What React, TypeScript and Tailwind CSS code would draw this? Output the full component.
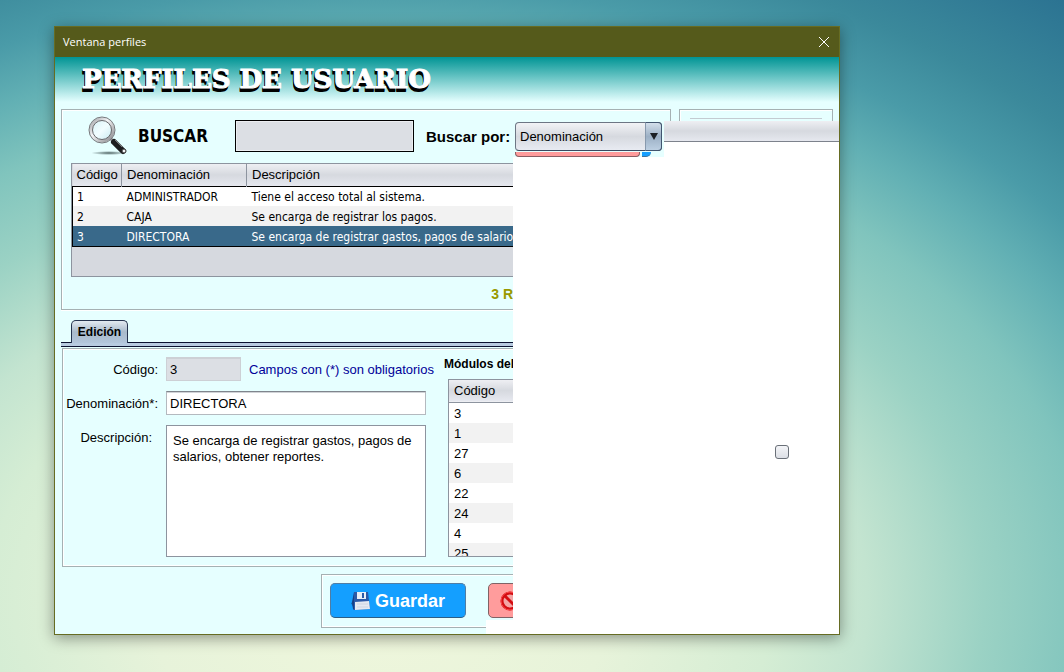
const PROFILES = [
  { id: 1, name: 'ADMINISTRADOR', description: 'Tiene el acceso total al sistema.' },
  { id: 2, name: 'CAJA', description: 'Se encarga de registrar los pagos.' },
  { id: 3, name: 'DIRECTORA', description: 'Se encarga de registrar gastos, pagos de salarios' },
]

const MODULES = [3, 1, 27, 6, 22, 24, 4, 25]

const HEADER_BG = 'bg-linear-to-b from-[#eeeff3] via-[#d6d9df] to-[#e6e8ef]'
const TAHOMA = "font-['DejaVu_Sans_Condensed','DejaVu_Sans',sans-serif]"

function MagnifierIcon() {
  return (
    <svg width="40" height="40" viewBox="0 0 40 40" aria-hidden="true">
      <defs>
        <linearGradient id="ring" x1="0" y1="0" x2="1" y2="1">
          <stop offset="0" stopColor="#a0a0a4" />
          <stop offset="0.4" stopColor="#f4f4f6" />
          <stop offset="1" stopColor="#88888c" />
        </linearGradient>
        <linearGradient id="lens" x1="0" y1="0" x2="1" y2="1">
          <stop offset="0" stopColor="#d3f0f6" />
          <stop offset="0.5" stopColor="#f2fdff" />
          <stop offset="1" stopColor="#c4e8ef" />
        </linearGradient>
        <radialGradient id="ground">
          <stop offset="0" stopColor="#4f6464" />
          <stop offset="1" stopColor="#4f6464" stopOpacity="0" />
        </radialGradient>
      </defs>
      <ellipse cx="21" cy="37" rx="18" ry="2" fill="url(#ground)" />
      <path d="M22 22 L27 27" stroke="#99999d" strokeWidth="3" />
      <path d="M26 26 L35 35" stroke="#1d1d1f" strokeWidth="6" strokeLinecap="round" />
      <path d="M27 24 L34 31" stroke="#77777a" strokeWidth="1" />
      <circle cx="36" cy="35" r="2" fill="#f4f4f6" stroke="#333" />
      <circle cx="14" cy="14" r="11" fill="url(#lens)" stroke="url(#ring)" strokeWidth="3" />
      <circle cx="14" cy="14" r="13" fill="none" stroke="#77777b" />
      <circle cx="14" cy="14" r="9.5" fill="none" stroke="#68686c" />
    </svg>
  )
}

function DiskIcon() {
  return (
    <svg width="20" height="20" viewBox="0 0 20 20" aria-hidden="true">
      <path d="M0 12 L4 10 V19 Z" fill="#0a5fa5" />
      <path d="M3 1 H17 L19 18 L3 19 Z" fill="#2a59a8" />
      <path d="M3 1 L3 19 L2 18 L1 11 Z" fill="#173f86" />
      <path d="M6 1 H15 V8 H6 Z" fill="#e9eef7" />
      <path d="M11 2 H13 V7 H11 Z" fill="#2a59a8" />
      <path d="M4 11 L18 10 L19 18 L4 19 Z" fill="#e4e9f2" />
      <path d="M6 13 H17 M6 16 H17" stroke="#cdd5e2" />
    </svg>
  )
}

function ForbiddenIcon() {
  return (
    <svg className="shrink-0" width="20" height="20" viewBox="0 0 20 20" aria-hidden="true">
      <circle cx="10" cy="10" r="8" fill="#f3a5a5" stroke="#d40d12" strokeWidth="3" />
      <path d="M5 5 L15 15" stroke="#d40d12" strokeWidth="3" />
      <circle cx="10" cy="10" r="9" fill="none" stroke="#f8484c" />
    </svg>
  )
}

function SearchPanel() {
  return (
    <section className="h-[201px] border border-r-0 border-[#a5b1b3] pl-[9px] shadow-[inset_1px_1px_0_#fff,0_1px_0_#fff]">
      <div className="mb-0.5 flex h-[51px] items-center">
        <div className="ml-[17px]">
          <MagnifierIcon />
        </div>
        <label htmlFor="buscar" className={`ml-2.5 w-[97px] pt-0.5 text-[17px] font-bold ${TAHOMA}`}>
          BUSCAR
        </label>
        <input
          id="buscar"
          type="text"
          className="h-8 w-[179px] shrink-0 border border-black bg-[#dcdfe4] px-1 shadow-[inset_0_0_0_1px_#eceef1]"
        />
        <label htmlFor="campo" className="ml-3 shrink-0 pt-1 text-[15px] font-bold whitespace-nowrap">
          Buscar por:
        </label>
      </div>

      <div className="h-[114px] overflow-hidden border border-r-0 border-[#8d949f] bg-[#d6d9df]">
        <table className="w-full table-fixed border-collapse text-left">
          <thead className={`h-[22px] ${HEADER_BG}`}>
            <tr>
              <th className="w-[49px] border-r border-[#8d949f] pl-1 font-normal">Código</th>
              <th className="w-[125px] border-r border-[#8d949f] pl-[5px] font-normal">Denominación</th>
              <th className="pl-[5px] font-normal">Descripción</th>
            </tr>
          </thead>
          <tbody className={`border-y border-l border-black text-xs ${TAHOMA}`}>
            {PROFILES.map((profile) => (
              <tr
                key={profile.id}
                className="h-5 bg-white even:bg-[#f2f2f2] last:bg-[#39698a] last:text-white"
              >
                <td className="pt-0.5 pl-1">{profile.id}</td>
                <td className="pt-0.5 pl-[5px]">{profile.name}</td>
                <td className="overflow-hidden pt-0.5 pl-[5px] whitespace-nowrap">{profile.description}</td>
              </tr>
            ))}
          </tbody>
        </table>
      </div>

      <p className="mt-[7px] text-right text-sm font-bold whitespace-nowrap text-[#999900]">3 R</p>
    </section>
  )
}

function EditPanel() {
  return (
    <section className="mt-2.5">
      <div role="tablist" className="flex border-b border-[#0b1230] pl-2.5">
        <button
          role="tab"
          aria-selected="true"
          className="-mb-px h-[23px] w-[57px] rounded-t-[5px] border border-b-0 border-[#26344f] bg-linear-to-b from-[#e3eaf1] via-[#a9bacb] to-[#b3c6db] text-xs font-bold"
        >
          Edición
        </button>
      </div>
      <div className="h-1 border-b border-[#0b1230] bg-[#b8cbe0]" />

      <div className="mt-px ml-px flex h-[219px] gap-[18px] overflow-hidden border border-r-0 border-[#a5b1b3] pt-2 shadow-[inset_1px_1px_0_#fff,inset_0_-1px_0_#fff]">
        <form className="grid w-[365px] shrink-0 grid-cols-[95px_1fr] content-start gap-x-2 gap-y-2.5">
          <label htmlFor="codigo" className="self-center pt-0.5 text-right">
            Código:
          </label>
          <div className="flex items-center">
            <input
              id="codigo"
              type="text"
              readOnly
              defaultValue="3"
              className="h-6 w-[75px] border border-t-2 border-[#cdd0d5] bg-[#dcdfe4] px-[3px]"
            />
            <span className="ml-2 pt-0.5 whitespace-nowrap text-[#000099]">Campos con (*) son obligatorios</span>
          </div>

          <label htmlFor="denominacion" className="self-center pt-0.5 text-right whitespace-nowrap">
            Denominación*:
          </label>
          <input
            id="denominacion"
            type="text"
            defaultValue="DIRECTORA"
            className="h-6 w-[260px] border border-[#b4b9bf] border-t-[#7f858d] bg-white px-[3px] shadow-[inset_0_1px_0_#d0d3d7]"
          />

          <label htmlFor="descripcion" className="pt-[3px] pr-1.5 text-right">
            Descripción:
          </label>
          <textarea
            id="descripcion"
            defaultValue="Se encarga de registrar gastos, pagos de salarios, obtener reportes."
            className="h-[132px] w-[260px] resize-none border border-[#8d949f] bg-white px-1.5 py-[7px] leading-4"
          />
        </form>

        <div className="min-w-0 flex-1">
          <h2 className="-ml-0.5 h-[22px] text-xs leading-[14px] font-bold whitespace-nowrap">Módulos del</h2>
          <div className="ml-0.5 h-[178px] overflow-hidden border border-r-0 border-[#8d949f]">
            <table className="w-full border-collapse text-left">
              <thead className={`h-[22px] border-b border-[#8d949f] ${HEADER_BG}`}>
                <tr>
                  <th className="pl-[5px] font-normal">Código</th>
                </tr>
              </thead>
              <tbody>
                {MODULES.map((id) => (
                  <tr key={id} className="h-5 bg-white even:bg-[#f2f2f2]">
                    <td className="pt-px pl-[5px] leading-[19px]">{id}</td>
                  </tr>
                ))}
              </tbody>
            </table>
          </div>
        </div>
      </div>
    </section>
  )
}

function ActionBar() {
  return (
    <div className="mt-[7px] ml-[260px] flex h-[54px] gap-[22px] overflow-hidden border border-r-0 border-[#a5b1b3] pt-2 pl-2 shadow-[inset_1px_1px_0_#fff,inset_0_-1px_0_#fff]">
      <button className="flex h-[35px] w-[136px] shrink-0 items-center justify-center gap-1 rounded-[5px] border border-[#4f7da5] border-b-[#2c5d86] bg-[#149fff] text-lg font-bold text-white">
        <DiskIcon />
        Guardar
      </button>
      <button
        aria-label="Cancelar"
        className="flex h-[35px] w-[136px] shrink-0 items-center rounded-[5px] border border-[#7f6366] bg-[#ff9c9c] pl-[11px]"
      >
        <ForbiddenIcon />
      </button>
    </div>
  )
}

/* Right part of the window, mostly not painted yet */
function UnpaintedArea() {
  return (
    <div className="flex min-w-0 flex-1 flex-col bg-white">
      <div className="flex h-[19px] bg-[#e6ffff] pt-[7px]">
        <div className="w-[158px] border-t border-r border-[#a5b1b3] shadow-[inset_0_1px_0_#fff]" />
        <div className="mr-1.5 ml-2 flex-1 border border-b-0 border-[#a5b1b3] px-2.5 pt-2 shadow-[inset_1px_1px_0_#fff]">
          <div className="h-px bg-[#c3cbd1]" />
        </div>
      </div>
      <div className="flex items-start">
        <div className="w-[151px] bg-[#e6ffff] pt-px pl-0.5">
          <div className="relative w-[147px]">
            <select
              id="campo"
              className="h-[29px] w-full appearance-none rounded-[4px] border border-[#6d7684] border-b-[#39485f] bg-linear-to-b from-[#f2f3f6] via-[#d6d9df] to-[#e8ebf2] pl-1"
            >
              <option>Denominación</option>
            </select>
            <span className="pointer-events-none absolute inset-y-0 right-0 flex w-[17px] items-center justify-center rounded-r-[4px] border border-[#41556f] border-l-[#8799ad] bg-linear-to-b from-[#d3dfeb] via-[#9cb0c5] to-[#bccfe2]">
              <svg width="8" height="7" viewBox="0 0 8 7" aria-hidden="true">
                <path d="M0 0 H8 L4 7 Z" fill="#1b1f24" />
              </svg>
            </span>
          </div>
          <div className="flex h-1.5 gap-0.5 pt-px">
            <div className="w-[125px] rounded-b-[4px] border border-t-0 border-[#8a5c62] bg-[#ff9c9c]" />
            <div className="w-[9px] rounded-br-[6px] border-b border-[#41729b] bg-[#149fff]" />
          </div>
        </div>
        <div className={`h-[21px] flex-1 border-b border-[#7d828c] ${HEADER_BG}`} />
      </div>
      <input
        type="checkbox"
        aria-label="Seleccionar módulo"
        className="mt-[288px] mr-[50px] size-3.5 appearance-none self-end rounded-[3px] border border-[#6a7078] bg-linear-to-b from-[#f4f5f8] to-[#dcdfe5]"
      />
    </div>
  )
}

export default function App() {
  return (
    <div className="min-h-screen bg-[radial-gradient(ellipse_1060px_750px_at_380px_600px,#f0f7dc_0%,#e7f3da_22%,#d5edd4_37%,#c3e4d0_46%,#9bd2c4_57%,#80c4bd_67%,#62b0b4_75%,#4a9ba8_82%,#3b899b_90%,#2a7191_104%)] pt-[26px] pr-[224px] pb-[37px] pl-[54px] font-['Liberation_Sans',Arial,sans-serif] text-[13px] text-black">
      <main className="border border-[#666c23] bg-[#e6ffff] shadow-[0_3px_14px_rgba(0,0,0,0.4)]">
        <div className="flex h-[30px] items-center justify-between bg-[#555a1b] pr-2 pl-2 font-['Open_Sans','Noto_Sans',sans-serif] text-[11px] text-white">
          <span>Ventana perfiles</span>
          <button aria-label="Cerrar" className="flex size-3.5 items-center justify-center">
            <svg width="12" height="12" viewBox="0 0 12 12" aria-hidden="true">
              <path d="M1 1 L11 11 M11 1 L1 11" stroke="white" />
            </svg>
          </button>
        </div>
        <header className="h-[45px] bg-linear-to-b/srgb from-[#009494] to-[#e6ffff] pl-[27px]">
          <h1 className="pt-1.5 font-['DejaVu_Serif',serif] text-[26px] leading-8 font-bold text-white [text-shadow:-1px_1px_0_#000,-1px_2px_0_#000,-1px_3px_0_#000,-1px_4px_0_#000] [-webkit-text-stroke:1px_white]">
            PERFILES DE USUARIO
          </h1>
        </header>
        <div className="relative flex">
          <div className="w-[458px] shrink-0 overflow-hidden pt-[7px] pb-1.5 pl-1.5">
            <SearchPanel />
            <EditPanel />
            <ActionBar />
          </div>
          <UnpaintedArea />
          <div className="absolute bottom-0 left-[431px] h-3.5 w-7 bg-white" />
        </div>
      </main>
    </div>
  )
}
